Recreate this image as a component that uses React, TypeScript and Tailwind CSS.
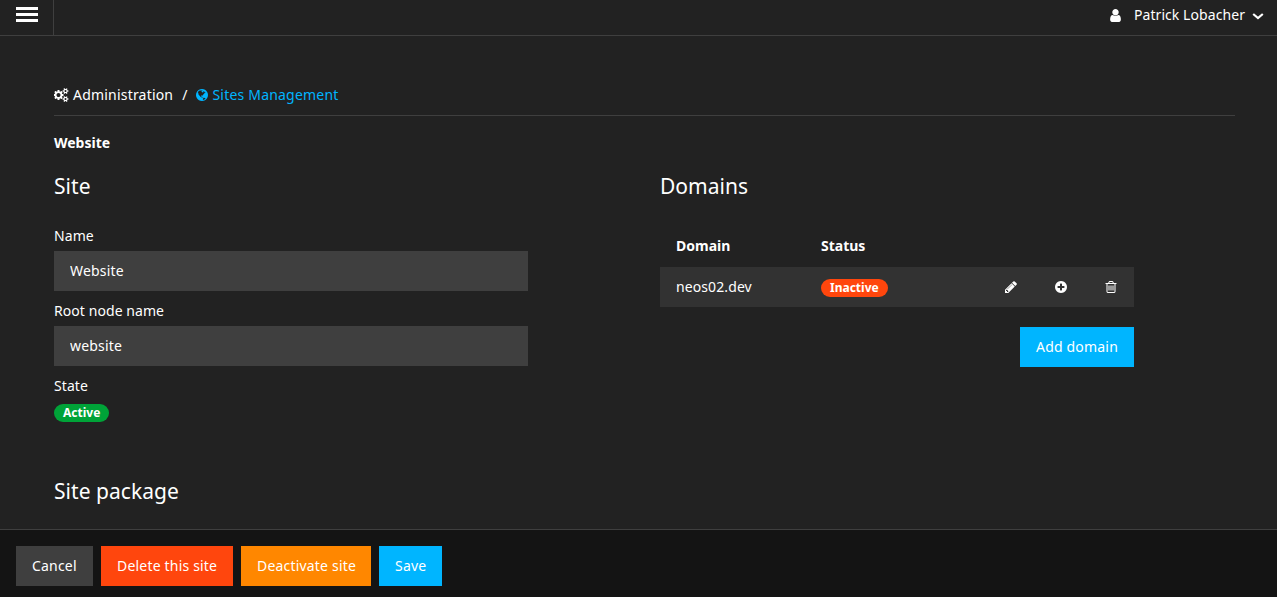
import type { ReactNode } from "react";

type IconProps = { d: string; className: string; viewBox?: string };

const Icon = ({ d, className, viewBox = "0 0 1792 1792" }: IconProps) => (
  <svg viewBox={viewBox} className={className} fill="currentColor" aria-hidden="true">
    <path d={d} />
  </svg>
);

const USER =
  "M1536 1399q0 109-62.5 187t-150.5 78h-854q-88 0-150.5-78t-62.5-187q0-85 8.5-160.5t31.5-152 58.5-131 94-89 134.5-34.5q131 128 313 128t313-128q76 0 134.5 34.5t94 89 58.5 131 31.5 152 8.5 160.5zm-256-887q0 159-112.5 271.5t-271.5 112.5-271.5-112.5-112.5-271.5 112.5-271.5 271.5-112.5 271.5 112.5 112.5 271.5z";
const PENCIL =
  "M491 1536l91-91-235-235-91 91v107h128v128h107zm523-928q0-22-22-22-10 0-17 7l-542 542q-7 7-7 17 0 22 22 22 10 0 17-7l542-542q7-7 7-17zm-54-192l416 416-832 832h-416v-416zm683 96q0 53-37 90l-166 166-416-416 166-165q36-38 90-38 53 0 91 38l235 234q37 39 37 91z";
const PLUS =
  "M1344 960v-128q0-26-19-45t-45-19h-256v-256q0-26-19-45t-45-19h-128q-26 0-45 19t-19 45v256h-256q-26 0-45 19t-19 45v128q0 26 19 45t45 19h256v256q0 26 19 45t45 19h128q26 0 45-19t19-45v-256h256q26 0 45-19t19-45zm320-64q0 209-103 385.5t-279.5 279.5-385.5 103-385.5-103-279.5-279.5-103-385.5 103-385.5 279.5-279.5 385.5-103 385.5 103 279.5 279.5 103 385.5z";
const TRASH =
  "M704 736v576q0 14-9 23t-23 9h-64q-14 0-23-9t-9-23v-576q0-14 9-23t23-9h64q14 0 23 9t9 23zm256 0v576q0 14-9 23t-23 9h-64q-14 0-23-9t-9-23v-576q0-14 9-23t23-9h64q14 0 23 9t9 23zm256 0v576q0 14-9 23t-23 9h-64q-14 0-23-9t-9-23v-576q0-14 9-23t23-9h64q14 0 23 9t9 23zm128 724v-948h-896v948q0 22 7 40.5t14.5 27 10.5 8.5h832q3 0 10.5-8.5t14.5-27 7-40.5zm-672-1076h448l-48-117q-7-9-17-11h-317q-10 2-17 11zm928 32v64q0 14-9 23t-23 9h-96v948q0 83-47 143.5t-113 60.5h-832q-66 0-113-58.5t-47-141.5v-952h-96q-14 0-23-9t-9-23v-64q0-14 9-23t23-9h309l70-167q15-37 54-63t79-26h320q40 0 79 26t54 63l70 167h309q14 0 23 9t9 23z";
const COGS =
  "M832 896q0-106-75-181t-181-75-181 75-75 181 75 181 181 75 181-75 75-181zm768 512q0-52-38-90t-90-38-90 38-38 90q0 53 37.5 90.5t90.5 37.5 90.5-37.5 37.5-90.5zm0-1024q0-52-38-90t-90-38-90 38-38 90q0 53 37.5 90.5t90.5 37.5 90.5-37.5 37.5-90.5zm-384 421v185q0 10-7 19.5t-16 10.5l-155 24q-11 35-32 76 34 48 90 115 7 11 7 20 0 12-7 19-23 30-82.5 89.5t-78.5 59.5q-11 0-21-7l-115-90q-37 19-77 31-11 108-23 155-7 24-30 24h-186q-11 0-20-7.5t-10-17.5l-23-153q-34-10-75-31l-118 89q-7 7-20 7-11 0-21-8-144-133-144-160 0-9 7-19 10-14 41-53t47-61q-23-44-35-82l-152-24q-10-1-17-9.5t-7-19.5v-185q0-10 7-19.5t16-10.5l155-24q11-35 32-76-34-48-90-115-7-11-7-20 0-12 7-20 22-30 82-89t79-59q11 0 21 7l115 90q34-18 77-32 11-108 23-154 7-24 30-24h186q11 0 20 7.5t10 17.5l23 153q34 10 75 31l118-89q8-7 20-7 11 0 21 8 144 133 144 160 0 8-7 19-12 16-42 54t-45 60q23 48 34 82l152 23q10 2 17 10.5t7 19.5zm640 533v140q0 16-149 31-12 27-30 52 51 113 51 138 0 4-4 7-122 71-124 71-8 0-46-47t-52-68q-20 2-30 2t-30-2q-14 21-52 68t-46 47q-2 0-124-71-4-3-4-7 0-25 51-138-18-25-30-52-149-15-149-31v-140q0-16 149-31 13-29 30-52-51-113-51-138 0-4 4-7 4-2 35-20t59-34 30-16q8 0 46 46.5t52 67.5q20-2 30-2t30 2q51-71 92-112l6-2q4 0 124 70 4 3 4 7 0 25-51 138 17 23 30 52 149 15 149 31zm0-1024v140q0 16-149 31-12 27-30 52 51 113 51 138 0 4-4 7-122 71-124 71-8 0-46-47t-52-68q-20 2-30 2t-30-2q-14 21-52 68t-46 47q-2 0-124-71-4-3-4-7 0-25 51-138-18-25-30-52-149-15-149-31v-140q0-16 149-31 13-29 30-52-51-113-51-138 0-4 4-7 4-2 35-20t59-34 30-16q8 0 46 46.5t52 67.5q20-2 30-2t30 2q51-71 92-112l6-2q4 0 124 70 4 3 4 7 0 25-51 138 17 23 30 52 149 15 149 31z";
const GLOBE =
  "M896 128q209 0 385.5 103t279.5 279.5 103 385.5-103 385.5-279.5 279.5-385.5 103-385.5-103-279.5-279.5-103-385.5 103-385.5 279.5-279.5 385.5-103zm274 521q-2 1-9.5 9.5t-13.5 9.5q2 0 4.5-5t5-11 3.5-7q6-7 22-15 14-6 52-12 34-8 51 11-2-2 9.5-13t14.5-12q3-2 15-4.5t15-7.5l2-22q-12 1-17.5-7t-6.5-21q0 2-6 8 0-7-4.5-8t-11.5 1-9 1q-10-3-15-7.5t-8-16.5-4-15q-2-5-9.5-11t-9.5-10q-1-2-2.5-5.5t-3-6.5-4-5.5-5.5-2.5-7 5-7.5 10-4.5 5q-3-2-6-1.5t-4.5 1-4.5 3-5 3.5q-3 2-8.5 3t-8.5 2q15-5-1-11-10-4-16-3 9-4 7.5-12t-8.5-14h5q-1-4-8.5-8.5t-17.5-8.5-13-6q-8-5-34-9.5t-33-.5q-5 6-4.5 10.5t4 14 3.5 12.5q1 6-5.5 13t-6.5 12q0 7 14 15.5t10 21.5q-3 8-16 16t-16 12q-5 8-1.5 18.5t10.5 16.5q2 2 1.5 4t-3.5 4.5-5.5 4-6.5 3.5l-3 2q-11 5-20.5-6t-13.5-26q-7-25-16-30-23-8-29 1-5-13-41-26-25-9-58-4 6-1 0-15-7-15-19-12 3-6 4-17.5t1-13.5q3-13 12-23 1-1 7-8.5t9.5-13.5.5-6q35 4 50-11 5-5 11.5-17t10.5-17q9-6 14-5.5t14.5 5.5 14.5 5q14 1 15.5-11t-7.5-20q12 1 3-17-4-7-8-9-12-4-27 5-8 4 2 8-1-1-9.5 10.5t-16.5 17.5-16-5q-1-1-5.5-13.5t-9.5-13.5q-8 0-16 15 3-8-11-15t-24-8q19-12-8-27-7-4-20.5-5t-19.5 4q-5 7-5.5 11.5t5 8 10.5 5.5 11.5 4 8.5 3q14 10 8 14-2 1-8.5 3.5t-11.5 4.5-6 4q-3 4 0 14t-2 14q-5-5-9-17.5t-7-16.5q7 9-25 6l-10-1q-4 0-16 2t-20.5 1-13.5-8q-4-8 0-20 1-4 4-2-4-3-11-9.5t-10-8.5q-46 15-94 41 6 1 12-1 5-2 13-6.5t10-5.5q34-14 42-7l5-5q14 16 20 25-7-4-30-1-20 6-22 12 7 12 5 18-4-3-11.5-10t-14.5-11-15-5q-16 0-22 1-146 80-235 222 7 7 12 8 4 1 5 9t2.5 11 11.5-3q9 8 3 19 1-1 44 27 19 17 21 21 3 11-10 18-1-2-9-9t-9-4q-3 5 .5 18.5t10.5 12.5q-7 0-9.5 16t-2.5 35.5-1 23.5l2 1q-3 12 5.5 34.5t21.5 19.5q-13 3 20 43 6 8 8 9 3 2 12 7.5t15 10 10 10.5q4 5 10 22.5t14 23.5q-2 6 9.5 20t10.5 23q-1 0-2.5 1t-2.5 1q3 7 15.5 14t15.5 13q1 3 2 10t3 11 8 2q2-20-24-62-15-25-17-29-3-5-5.5-15.5t-4.5-14.5q2 0 6 1.5t8.5 3.5 7.5 4 2 3q-3 7 2 17.5t12 18.5 17 19 12 13q6 6 14 19.5t0 13.5q9 0 20 10.5t17 19.5q5 8 8 26t5 24q2 7 8.5 13.5t12.5 9.5l16 8 13 7q5 2 18.5 10.5t21.5 11.5q10 4 16 4t14.5-2.5 13.5-3.5q15-2 29 15t21 21q36 19 55 11-2 1 .5 7.5t8 15.5 9 14.5 5.5 8.5q5 6 18 15t18 15q6-4 7-9-3 8 7 20t18 10q14-3 14-32-31 15-49-18 0-1-2.5-5.5t-4-8.5-2.5-8.5 0-7.5 5-3q9 0 10-3.5t-2-12.5-4-13q-1-8-11-20t-12-15q-5 9-16 8t-16-9q0 1-1.5 5.5t-1.5 6.5q-13 0-15-1 1-3 2.5-17.5t3.5-22.5q1-4 5.5-12t7.5-14.5 4-12.5-4.5-9.5-17.5-2.5q-19 1-26 20-1 3-3 10.5t-5 11.5-9 7q-7 3-24 2t-24-5q-13-8-22.5-29t-9.5-37q0-10 2.5-26.5t3-25-5.5-24.5q3-2 9-9.5t10-10.5q2-1 4.5-1.5t4.5 0 4-1.5 3-6q-1-1-4-3-3-3-4-3 7 3 28.5-1.5t27.5 1.5q15 11 22-2 0-1-2.5-9.5t-.5-13.5q5 27 29 9 3 3 15.5 5t17.5 5q3 2 7 5.5t5.5 4.5 5-.5 8.5-6.5q10 14 12 24 11 40 19 44 7 3 11 2t4.5-9.5 0-14-1.5-12.5l-1-8v-18l-1-8q-15-3-18.5-12t1.5-18.5 15-18.5q1-1 8-3.5t15.5-6.5 12.5-8q21-19 15-35 7 0 11-9-1 0-5-3t-7.5-5-4.5-2q9-5 2-16 5-3 7.5-11t7.5-10q9 12 21 2 8-8 1-16 5-7 20.5-10.5t18.5-9.5q7 2 8-2t1-12 3-12q4-5 15-9t13-5l17-11q3-4 0-4 18 2 31-11 10-11-6-20 3-6-3-9.5t-15-5.5q3-1 11.5-.5t10.5-1.5q15-10-7-16-17-5-43 12zm-163 877q206-36 351-189-3-3-12.5-4.5t-12.5-3.5q-18-7-24-8 1-7-2.5-13t-8-9-12.5-8-11-7q-2-2-7-6t-7-5.5-7.5-4.5-8.5-2-10 1l-3 1q-3 1-5.5 2.5t-5.5 3-4 3 0 2.5q-21-17-36-22-5-1-11-5.5t-10.5-7-10-1.5-11.5 7q-5 5-6 15t-2 13q-7-5 0-17.5t2-18.5q-3-6-10.5-4.5t-12 4.5-11.5 8.5-9 6.5-8.5 5.5-8.5 7.5q-3 4-6 12t-5 11q-2-4-11.5-6.5t-9.5-5.5q2 10 4 35t5 38q7 31-12 48-27 25-29 40-4 22 12 26 0 7-8 20.5t-7 21.5q0 6 2 16z";

const Label = ({ children }: { children: ReactNode }) => (
  <label className="block h-[30px] leading-[30px] tracking-[0.07px]">{children}</label>
);

const Field = ({ label, value }: { label: string; value: string }) => (
  <div className="mb-[5px]">
    <Label>{label}</Label>
    <input
      className="block h-10 w-full bg-[#3f3f3f] px-4 pb-0.5 tracking-[0.2px] text-white outline-none"
      defaultValue={value}
    />
  </div>
);

const Badge = ({ className, children }: { className: string; children: ReactNode }) => (
  <span className={`block h-[18px] w-fit rounded-full px-[9px] text-xs leading-[18px] font-bold ${className}`}>{children}</span>
);

const Button = ({ className, children }: { className: string; children: ReactNode }) => (
  <button className={`h-10 shrink-0 pl-4 text-left tracking-[0.19px] whitespace-nowrap ${className}`}>{children}</button>
);

const Heading = ({ children }: { children: ReactNode }) => (
  <h2 className="text-[21px] leading-[30px] tracking-[0.04px]">{children}</h2>
);

export default function App() {
  return (
    <div className="flex h-[597px] w-full flex-col overflow-hidden bg-[#222222] font-['Noto_Sans',sans-serif] text-sm text-white">
      <header className="flex h-9 shrink-0 border-b border-[#3f3f3f]">
        <button className="flex w-[54px] flex-col gap-[3px] border-r border-[#3f3f3f] pt-[7px] pl-4" aria-label="Menu">
          <span className="h-[3px] w-[22px] bg-white" />
          <span className="h-[3px] w-[22px] bg-white" />
          <span className="h-[3px] w-[22px] bg-white" />
        </button>
        <div className="ml-auto flex h-[30px] items-center pr-[13px]">
          <Icon d={USER} className="mr-[11px] h-[15px] w-[15px]" />
          <span className="tracking-[0.07px]">Patrick Lobacher</span>
          <svg viewBox="0 0 12 8" className="mt-px ml-[7px] h-2 w-3" fill="none" stroke="currentColor" strokeWidth="2.2">
            <path d="M1.2 2 6 6 10.8 2" />
          </svg>
        </div>
      </header>

      <main className="flex min-h-0 flex-1 flex-col overflow-hidden pt-10 pr-[42px] pl-[54px]">
        <nav className="flex h-10 shrink-0 items-center border-b border-[#3f3f3f] pb-[2px]">
          <Icon d={COGS} viewBox="0 0 1920 1792" className="mr-1 h-3.5 w-[15px]" />
          <span className="tracking-[0.2px]">Administration</span>
          <span className="mr-2 ml-[9px]">/</span>
          <Icon d={GLOBE} className="h-3.5 w-3.5 text-[#00b5ff]" />
          <span className="ml-[3px] tracking-[0.2px] text-[#00b5ff]">Sites Management</span>
        </nav>
        <h1 className="mt-[17px] text-sm leading-5 font-bold">Website</h1>

        <div className="mt-[18px] flex gap-[132px]">
          <section className="w-[474px]">
            <Heading>Site</Heading>
            <div className="mt-5">
              <Field label="Name" value="Website" />
              <Field label="Root node name" value="website" />
              <Label>State</Label>
              <Badge className="mt-[3px] bg-[#00a338]">Active</Badge>
            </div>
            <div className="mt-[54px]">
              <Heading>Site package</Heading>
            </div>
          </section>

          <section className="w-[474px]">
            <Heading>Domains</Heading>
            <div className="mt-[25px] grid h-[41px] grid-cols-[145px_1fr] items-center pb-px pl-4 font-bold">
              <span>Domain</span>
              <span>Status</span>
            </div>
            <div className="grid h-10 grid-cols-[145px_1fr_auto] items-center bg-[#323232] pr-[16.5px] pl-4">
              <span className="tracking-[0.1px]">neos02.dev</span>
              <Badge className="mt-0.5 bg-[#ff460d]">Inactive</Badge>
              <div className="flex gap-9">
                <Icon d={PENCIL} className="h-3.5 w-3.5" />
                <Icon d={PLUS} className="h-3.5 w-3.5" />
                <Icon d={TRASH} className="-ml-[0.5px] h-3.5 w-3.5" />
              </div>
            </div>
            <div className="mt-5 flex justify-end">
              <Button className="w-[114px] bg-[#00b5ff]">Add domain</Button>
            </div>
          </section>
        </div>
      </main>

      <footer className="flex h-[68px] shrink-0 gap-2 border-t border-[#3f3f3f] bg-[#141414] pt-4 pl-4">
        <Button className="w-[77px] bg-[#3f3f3f]">Cancel</Button>
        <Button className="w-[132px] bg-[#ff460d]">Delete this site</Button>
        <Button className="w-[130px] bg-[#ff8700]">Deactivate site</Button>
        <Button className="w-[63px] bg-[#00b5ff]">Save</Button>
      </footer>
    </div>
  );
}
